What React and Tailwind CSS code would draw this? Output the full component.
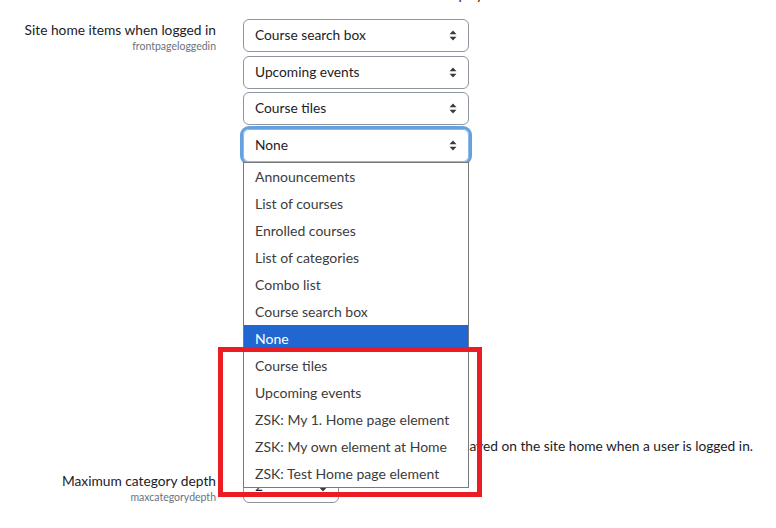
import React from 'react';

const font = { fontFamily: 'Lato, "Noto Sans", sans-serif' };

const Arrows = () => (
  <svg width="8" height="11" viewBox="0 0 8 11" className="shrink-0">
    <path d="M4 0.5 L7.5 4.2 L0.5 4.2 Z" fill="#343a40" />
    <path d="M4 10.5 L7.5 6.8 L0.5 6.8 Z" fill="#343a40" />
  </svg>
);

const Select = ({ value, focused, className = '', children }) => (
  <div
    className={`relative flex h-[33px] items-center justify-between rounded-[6px] border pl-[11px] pr-[11px] text-[13.75px] text-[#1d2125] ${
      focused
        ? 'border-[#8ab6e8] shadow-[0_0_0_3px_rgba(50,130,215,0.75)]'
        : 'border-[#8f959e]'
    } ${className}`}
  >
    <span>{value}</span>
    <Arrows />
    {children}
  </div>
);

const options = [
  'Announcements',
  'List of courses',
  'Enrolled courses',
  'List of categories',
  'Combo list',
  'Course search box',
  'None',
  'Course tiles',
  'Upcoming events',
  'ZSK: My 1. Home page element',
  'ZSK: My own element at Home',
  'ZSK: Test Home page element',
];

const App = () => {
  return (
    <div className="relative h-[528px] w-[776px] overflow-hidden bg-white" style={font}>
      <div className="grid grid-cols-[216px_1fr] gap-x-[27px]">
        {/* tail of previous setting's description */}
        <div />
        <p className="-mt-[16px] h-[22px] whitespace-nowrap text-[13.75px] leading-[22px] text-[#1d2125]">
          The items selected above will be displayed on the site home.
        </p>

        {/* Site home items when logged in */}
        <div className="mt-[13px] pt-[1px] text-right">
          <div className="whitespace-nowrap text-[13.75px] leading-[20px] text-[#1d2125]">Site home items when logged in</div>
          <div className="text-[10.5px] leading-[12px] text-[#6a737b]">frontpageloggedin</div>
        </div>
        <div className="mt-[13px] flex flex-col">
          <div className="flex w-[226px] flex-col gap-[3.5px]">
            <Select value="Course search box" />
            <Select value="Upcoming events" />
            <Select value="Course tiles" />
            <Select value="None" focused>
              <ul className="absolute left-[-1px] top-[32px] z-10 w-[226px] border border-[#7a7a7a] bg-white">
                {options.map((o) => (
                  <li
                    key={o}
                    className={`h-[27px] pl-[11px] text-[14px] leading-[27px] ${
                      o === 'None' ? 'bg-[#2167d1] text-white' : 'text-[#3c3c3c]'
                    }`}
                  >
                    {o}
                  </li>
                ))}
              </ul>
            </Select>
          </div>
          <p className="mt-[273px] h-[22px] whitespace-nowrap text-[13.75px] leading-[22px] text-[#1d2125]">
            The items selected above will be displayed on the site home when a user is logged in.
          </p>
        </div>

        {/* Maximum category depth */}
        <div className="mt-[12px] pt-[2px] text-right">
          <div className="whitespace-nowrap text-[13.75px] leading-[20px] text-[#1d2125]">Maximum category depth</div>
          <div className="text-[10.5px] leading-[12px] text-[#6a737b]">maxcategorydepth</div>
        </div>
        <div className="mt-[13px] flex items-center gap-[6px]">
          <Select value="2" className="w-[96px]" />
          <span className="-mt-[6px] text-[13.75px] text-[#1d2125]">Default: 2</span>
        </div>
      </div>

      {/* annotation */}
      <div className="pointer-events-none absolute left-[218px] top-[347px] z-20 h-[150px] w-[264px] border-[5px] border-[#ec1c24]" />
    </div>
  );
};

export default App;
